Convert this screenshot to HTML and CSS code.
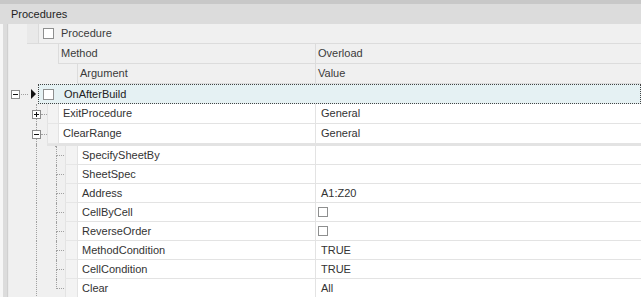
FILE: index.html
```html
<!DOCTYPE html>
<html>
  <head>
    <title>Procedures</title>
    <meta charset="utf8">
    <link rel="stylesheet" href="styles.css">
  </head>
  <body>
    <div class="pane">
      <div class="topbar"></div>
      <div class="caption">Procedures</div>
      <div class="tree">
        <div class="frame"></div>
        <div class="rows">

          <div class="row">
            <div class="indent w18"></div>
            <div class="selcell"></div>
            <div class="chkcell"><span class="check"></span></div>
            <div class="cell hdr fill">Procedure</div>
          </div>

          <div class="row">
            <div class="indent w49"></div>
            <div class="cell hdr name lvl1">Method</div>
            <div class="cell hdr value">Overload</div>
          </div>

          <div class="row">
            <div class="indent w68"></div>
            <div class="cell hdr name lvl2">Argument</div>
            <div class="cell hdr value">Value</div>
          </div>

          <div class="row">
            <div class="indent w29">
              <svg class="toggle" width="9" height="9"><rect x="0.5" y="0.5" width="8" height="8" fill="#fff" stroke="#8c8c8c"/><path d="M2 4.5h5" stroke="#111"/></svg>
              <span class="hdots"></span>
              <span class="arrow"></span>
            </div>
            <div class="current">
              <span class="check"></span>
              <span class="curtext">OnAfterBuild</span>
            </div>
          </div>

          <div class="row">
            <div class="indent w38">
              <div class="expander">
                <span class="stem"></span>
                <svg width="9" height="9"><rect x="0.5" y="0.5" width="8" height="8" fill="#fff" stroke="#8c8c8c"/><path d="M2 4.5h5M4.5 2v5" stroke="#111"/></svg>
                <span class="stem"></span>
              </div>
              <span class="hline"></span>
            </div>
            <div class="rh"></div>
            <div class="cell name lvl1">ExitProcedure</div>
            <div class="cell value">General</div>
          </div>

          <div class="row">
            <div class="indent w38">
              <div class="expander">
                <span class="stem"></span>
                <svg width="9" height="9"><rect x="0.5" y="0.5" width="8" height="8" fill="#fff" stroke="#8c8c8c"/><path d="M2 4.5h5" stroke="#111"/></svg>
                <span class="stem"></span>
              </div>
              <span class="hline"></span>
            </div>
            <div class="rh"></div>
            <div class="cell name lvl1">ClearRange</div>
            <div class="cell value">General</div>
          </div>

          <div class="row spacer">
            <div class="indent w38">
              <span class="vline both"></span>
            </div>
            <div class="band"></div>
          </div>

          <div class="row child">
            <div class="indent w56"><span class="vline"></span><span class="branch"><i></i><b></b></span></div>
            <div class="rh"></div>
            <div class="cell name lvl2">SpecifySheetBy</div>
            <div class="cell value"></div>
          </div>
          <div class="row child">
            <div class="indent w56"><span class="vline"></span><span class="branch"><i></i><b></b></span></div>
            <div class="rh"></div>
            <div class="cell name lvl2">SheetSpec</div>
            <div class="cell value"></div>
          </div>
          <div class="row child">
            <div class="indent w56"><span class="vline"></span><span class="branch"><i></i><b></b></span></div>
            <div class="rh"></div>
            <div class="cell name lvl2">Address</div>
            <div class="cell value">A1:Z20</div>
          </div>
          <div class="row child">
            <div class="indent w56"><span class="vline"></span><span class="branch"><i></i><b></b></span></div>
            <div class="rh"></div>
            <div class="cell name lvl2">CellByCell</div>
            <div class="cell value"><span class="check small"></span></div>
          </div>
          <div class="row child">
            <div class="indent w56"><span class="vline"></span><span class="branch"><i></i><b></b></span></div>
            <div class="rh"></div>
            <div class="cell name lvl2">ReverseOrder</div>
            <div class="cell value"><span class="check small"></span></div>
          </div>
          <div class="row child">
            <div class="indent w56"><span class="vline"></span><span class="branch"><i></i><b></b></span></div>
            <div class="rh"></div>
            <div class="cell name lvl2">MethodCondition</div>
            <div class="cell value">TRUE</div>
          </div>
          <div class="row child">
            <div class="indent w56"><span class="vline"></span><span class="branch"><i></i><b></b></span></div>
            <div class="rh"></div>
            <div class="cell name lvl2">CellCondition</div>
            <div class="cell value">TRUE</div>
          </div>
          <div class="row child">
            <div class="indent w56"><span class="vline"></span><span class="branch last"><i></i><b></b></span></div>
            <div class="rh"></div>
            <div class="cell name lvl2">Clear</div>
            <div class="cell value">All</div>
          </div>

        </div>
      </div>
    </div>
  </body>
</html>
```

FILE: styles.css
```css
body {
  margin: 0;
  background: #fff;
  font-family: 'Liberation Sans', Arial, sans-serif;
  font-size: 11px;
  color: #333;
}

.pane {
  width: 641px;
  height: 297px;
  overflow: hidden;
  background: #f0f0f0;
}

.topbar {
  height: 4px;
  background: #c8c8c8;
}

.caption {
  height: 20px;
  line-height: 20px;
  padding-left: 11px;
  background: #dcdcdc;
  color: #1e1e1e;
}

.tree {
  display: flex;
  height: 273px;
}

.frame {
  flex: none;
  width: 9px;
  background: linear-gradient(to right, #f6f6f6 0 3px, #dcdcdc 3px 7px, #d0d0d0 7px 8px, #ebebeb 8px);
}

.rows {
  flex: 1;
  min-width: 0;
}

.row {
  display: flex;
  height: 20px;
}

.row.child {
  height: 19px;
}

.row.spacer {
  height: 2px;
}

.indent {
  flex: none;
  display: flex;
  align-items: stretch;
  box-sizing: border-box;
}

.w18 { width: 18px; }
.w29 { width: 29px; align-items: center; padding-left: 2px; }
.w38 { width: 38px; padding-left: 23px; }
.w49 { width: 49px; }
.w56 { width: 56px; padding-left: 27px; }
.w68 { width: 68px; }

.cell {
  box-sizing: border-box;
  line-height: 19px;
  white-space: nowrap;
  overflow: hidden;
  border-bottom: 1px solid #e3e3e3;
  background: #fff;
}

.cell.hdr {
  background: #f0f0f0;
  border-bottom-color: #dcdcdc;
  color: #3a3a3a;
}

.cell.fill {
  flex: 1;
  padding-left: 3px;
}

.cell.name {
  flex: none;
  border-left: 1px solid #e3e3e3;
}

.cell.hdr.name {
  border-left-color: #dcdcdc;
  padding-left: 2px;
}

.lvl1 { width: 257px; padding-left: 4px; }
.lvl2 { width: 238px; padding-left: 4px; }

.cell.value {
  flex: 1;
  border-left: 1px solid #e3e3e3;
  padding-left: 5px;
  display: flex;
  align-items: center;
}

.cell.hdr.value {
  border-left-color: #dcdcdc;
  padding-left: 2px;
}

.selcell {
  flex: none;
  box-sizing: border-box;
  width: 12px;
  background: #e9e9e9;
  border-right: 1px solid #dadada;
  border-bottom: 1px solid #dcdcdc;
}

.chkcell {
  flex: none;
  box-sizing: border-box;
  width: 19px;
  padding-left: 4px;
  display: flex;
  align-items: center;
  border-bottom: 1px solid #dcdcdc;
}

.check {
  display: inline-block;
  flex: none;
  width: 11px;
  height: 11px;
  box-sizing: border-box;
  border: 1px solid #8e8f8f;
  background: #fff;
}

.check.small {
  width: 10px;
  height: 10px;
  margin-left: -3px;
}

.toggle {
  flex: none;
}

.hdots {
  width: 7px;
  margin-left: 1px;
  height: 0;
  border-top: 1px dotted #a0a0a0;
}

.arrow {
  width: 0;
  height: 0;
  margin-left: 3px;
  border-left: 5px solid #111;
  border-top: 5px solid transparent;
  border-bottom: 5px solid transparent;
}

.current {
  flex: 1;
  box-sizing: border-box;
  display: flex;
  align-items: center;
  padding-left: 4px;
  border: 1px dotted #444;
  background: #e5f1f3;
}

.curtext {
  margin-left: 10px;
  color: #222;
}

.expander {
  flex: none;
  width: 9px;
  display: flex;
  flex-direction: column;
  align-items: flex-start;
}

.stem {
  flex: 1;
  margin-left: 4px;
  border-left: 1px dotted #a0a0a0;
}

.hline {
  align-self: center;
  width: 6px;
  height: 0;
  border-top: 1px dotted #a0a0a0;
}

.rh {
  flex: none;
  box-sizing: border-box;
  width: 11px;
  border-left: 1px solid #e3e3e3;
  border-bottom: 1px solid #e6e6e6;
  background: #f3f3f3;
}

.row.child .rh {
  width: 12px;
}

.band {
  flex: 1;
  background: #e3e3e3;
}

.vline {
  flex: none;
  width: 19px;
  border-left: 1px dotted #a0a0a0;
}

.vline.both {
  box-sizing: border-box;
  width: 20px;
  margin-left: 4px;
  margin-right: -20px;
  border-right: 1px dotted #a0a0a0;
}

.branch {
  flex: none;
  width: 10px;
  display: flex;
  flex-direction: column;
}

.branch i {
  height: 9px;
  border-left: 1px dotted #a0a0a0;
  border-bottom: 1px dotted #a0a0a0;
}

.branch b {
  flex: 1;
  border-left: 1px dotted #a0a0a0;
}

.branch.last b {
  border-left: none;
}
```
